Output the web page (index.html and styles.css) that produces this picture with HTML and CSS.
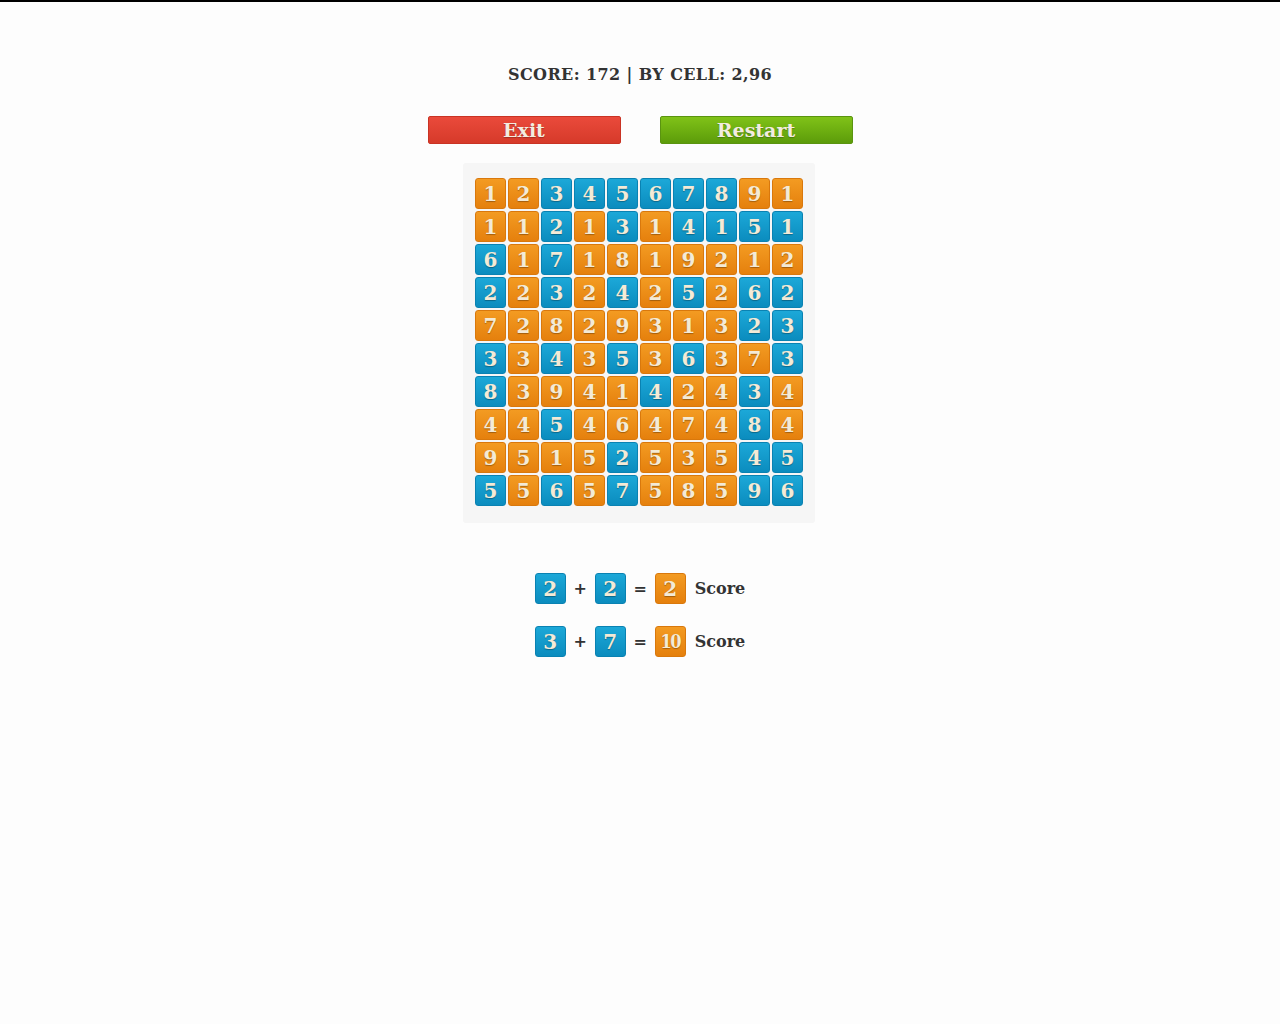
FILE: index.html
```html
<!DOCTYPE html>
<html>
<head>
<meta charset="utf-8">
<title>Numbers</title>
<link rel="stylesheet" href="styles.css">
</head>
<body>
<div class="page">
  <div class="score">SCORE: 172 | BY CELL: 2,96</div>
  <div class="buttons">
    <button class="btn btn-exit">Exit</button>
    <button class="btn btn-restart">Restart</button>
  </div>
  <div class="board">
    <div class="grid">
      <div class="c o">1</div><div class="c o">2</div><div class="c b">3</div><div class="c b">4</div><div class="c b">5</div><div class="c b">6</div><div class="c b">7</div><div class="c b">8</div><div class="c o">9</div><div class="c o">1</div>
      <div class="c o">1</div><div class="c o">1</div><div class="c b">2</div><div class="c o">1</div><div class="c b">3</div><div class="c o">1</div><div class="c b">4</div><div class="c b">1</div><div class="c b">5</div><div class="c b">1</div>
      <div class="c b">6</div><div class="c o">1</div><div class="c b">7</div><div class="c o">1</div><div class="c o">8</div><div class="c o">1</div><div class="c o">9</div><div class="c o">2</div><div class="c o">1</div><div class="c o">2</div>
      <div class="c b">2</div><div class="c o">2</div><div class="c b">3</div><div class="c o">2</div><div class="c b">4</div><div class="c o">2</div><div class="c b">5</div><div class="c o">2</div><div class="c b">6</div><div class="c b">2</div>
      <div class="c o">7</div><div class="c o">2</div><div class="c o">8</div><div class="c o">2</div><div class="c o">9</div><div class="c o">3</div><div class="c o">1</div><div class="c o">3</div><div class="c b">2</div><div class="c b">3</div>
      <div class="c b">3</div><div class="c o">3</div><div class="c b">4</div><div class="c o">3</div><div class="c b">5</div><div class="c o">3</div><div class="c b">6</div><div class="c o">3</div><div class="c o">7</div><div class="c b">3</div>
      <div class="c b">8</div><div class="c o">3</div><div class="c o">9</div><div class="c o">4</div><div class="c o">1</div><div class="c b">4</div><div class="c o">2</div><div class="c o">4</div><div class="c b">3</div><div class="c o">4</div>
      <div class="c o">4</div><div class="c o">4</div><div class="c b">5</div><div class="c o">4</div><div class="c o">6</div><div class="c o">4</div><div class="c o">7</div><div class="c o">4</div><div class="c b">8</div><div class="c o">4</div>
      <div class="c o">9</div><div class="c o">5</div><div class="c o">1</div><div class="c o">5</div><div class="c b">2</div><div class="c o">5</div><div class="c o">3</div><div class="c o">5</div><div class="c b">4</div><div class="c b">5</div>
      <div class="c b">5</div><div class="c o">5</div><div class="c b">6</div><div class="c o">5</div><div class="c b">7</div><div class="c o">5</div><div class="c o">8</div><div class="c o">5</div><div class="c b">9</div><div class="c b">6</div>
    </div>
  </div>
  <div class="legend">
    <div class="lrow">
      <div class="c b">2</div><span class="op">+</span><div class="c b">2</div><span class="op">=</span><div class="c o">2</div><span class="lbl">Score</span>
    </div>
    <div class="lrow">
      <div class="c b">3</div><span class="op">+</span><div class="c b">7</div><span class="op">=</span><div class="c o ten">10</div><span class="lbl">Score</span>
    </div>
  </div>
</div>
</body>
</html>
```
FILE: styles.css
```css
html, body {
  margin: 0;
  padding: 0;
  background: #fdfdfd;
}
body {
  border-top: 2px solid #000;
  font-family: "DejaVu Serif", "Liberation Serif", serif;
  min-height: 1022px;
  box-sizing: border-box;
}
.page {
  display: flex;
  flex-direction: column;
  align-items: center;
}
.score {
  margin-top: 63px;
  font-size: 16px;
  line-height: 20px;
  font-weight: bold;
  color: #333;
  letter-spacing: 0.4px;
}
.buttons {
  margin-top: 31px;
  display: flex;
  gap: 39px;
}
.btn {
  width: 193px;
  height: 28px;
  border-radius: 2px;
  font-family: "DejaVu Serif", serif;
  font-weight: bold;
  font-size: 19px;
  line-height: 24px;
  padding: 0;
  color: #f3ece0;
  cursor: pointer;
  text-shadow: 0 1px 1px rgba(0,0,0,0.25);
}
.btn-exit {
  background: linear-gradient(#ea4a3b, #d63a2a);
  border: 1px solid #c93324;
}
.btn-restart {
  background: linear-gradient(#80c218, #5c9c0a);
  border: 1px solid #5a9410;
}
.board {
  margin-top: 19px;
  margin-right: 2px;
  background: #f6f6f6;
  padding: 15px 12px 17px;
  border-radius: 3px;
}
.grid {
  display: grid;
  grid-template-columns: repeat(10, 31px);
  grid-auto-rows: 31px;
  gap: 2px;
}
.c {
  width: 31px;
  height: 31px;
  box-sizing: border-box;
  border-radius: 3px;
  display: flex;
  align-items: center;
  justify-content: center;
  font-weight: bold;
  font-size: 20px;
  color: #f4ead6;
  font-family: "DejaVu Serif", serif;
  text-shadow: 0 1px 1px rgba(0,0,0,0.3);
}
.o {
  background: linear-gradient(#f39b22, #e5800d);
  border: 1px solid #d9780c;
}
.b {
  background: linear-gradient(#1ca8d8, #0b8cbe);
  border: 1px solid #0a82b2;
}
.ten {
  font-size: 18px;
  letter-spacing: -1.5px;
  font-stretch: condensed;
}
.legend {
  margin-top: 50px;
  display: flex;
  flex-direction: column;
  gap: 22px;
}
.lrow {
  display: flex;
  align-items: center;
}
.op {
  width: 29px;
  text-align: center;
  font-size: 16px;
  font-weight: bold;
  color: #333;
  font-family: "DejaVu Sans", sans-serif;
}
.lbl {
  margin-left: 9px;
  font-size: 16px;
  font-weight: bold;
  color: #333;
}
```
